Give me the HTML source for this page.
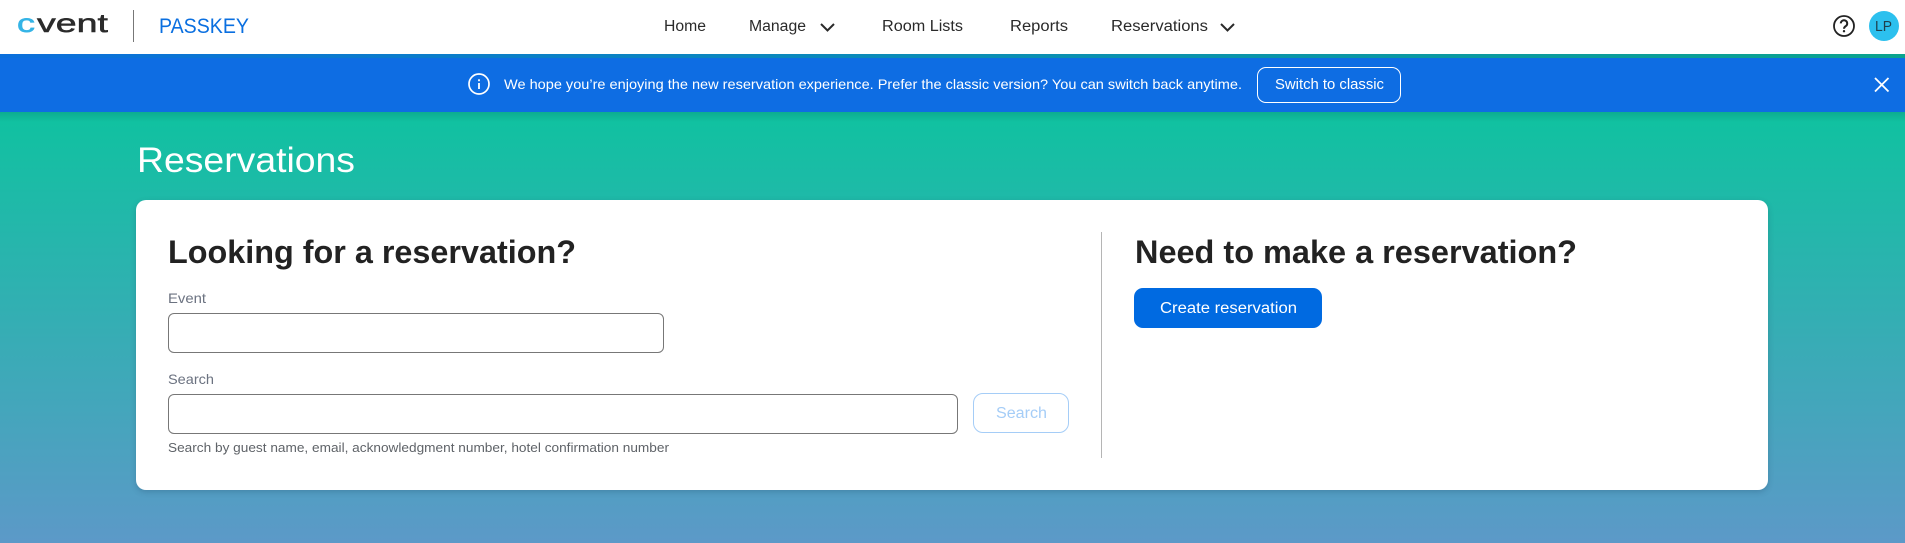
<!DOCTYPE html>
<html lang="en">
<head>
<meta charset="utf-8">
<title>Reservations</title>
<style>
html,body{margin:0;padding:0;width:1905px;height:543px;overflow:hidden;background:#5b9ac7}
body{position:relative;font-family:"Liberation Sans",sans-serif}
div,input,button{position:absolute;box-sizing:border-box;margin:0;padding:0}
#bg{left:0;top:112px;width:1905px;height:431px;background:linear-gradient(180deg,#0fc2a0 0%,#5c99c8 100%)}
#shade{left:0;top:112px;width:1905px;height:10px;background:linear-gradient(180deg,rgba(0,60,60,.16),rgba(0,60,60,0))}
#header{left:0;top:0;width:1905px;height:54px;background:#fff}
#strip{left:0;top:54px;width:1905px;height:4px;background:linear-gradient(90deg,#0b6fdc 0%,#0a8db5 50%,#0aa38e 100%)}
#banner{left:0;top:58px;width:1905px;height:54px;background:#0e6de3}
#card{left:136px;top:200px;width:1632px;height:290px;background:#fff;border-radius:10px;box-shadow:0 2px 6px rgba(30,60,90,.25)}
#vline{left:1101px;top:232px;width:1px;height:226px;background:#b5b5b5}
#dline{left:133px;top:10px;width:1px;height:32px;background:#777}
input{background:#fff;border:1px solid #777;border-radius:6px;outline:none}
#switch{left:1257px;top:67px;width:144px;height:36px;background:transparent;border:1px solid #fff;border-radius:9px}
#searchbtn{left:973px;top:393px;width:96px;height:40px;background:#fff;border:1px solid #a5cdf7;border-radius:10px}
#create{left:1134px;top:288px;width:188px;height:40px;background:#006ae1;border:0;border-radius:9px}
#avatar{left:1869px;top:11px;width:30px;height:30px;border-radius:50%;background:#2cc0ee}
svg{position:absolute;left:0;top:0}
text{font-family:"Liberation Sans",sans-serif}
</style>
</head>
<body>
<div id="bg"></div>
<div id="shade"></div>
<div id="header"></div>
<div id="strip"></div>
<div id="banner"></div>
<div id="dline"></div>
<div id="avatar"></div>
<div id="card"></div>
<div id="vline"></div>
<input id="event" type="text" style="left:168px;top:313px;width:496px;height:40px" aria-label="Event">
<input id="search" type="text" style="left:168px;top:394px;width:790px;height:40px" aria-label="Search">
<button id="switch" aria-label="Switch to classic"></button>
<button id="searchbtn" aria-label="Search"></button>
<button id="create" aria-label="Create reservation"></button>

<svg width="1905" height="543" viewBox="0 0 1905 543" xmlns="http://www.w3.org/2000/svg">
  <!-- logo -->
  <text x="17" y="32" font-size="26" fill="#35b4e6" stroke="#35b4e6" stroke-width=".6" textLength="18" lengthAdjust="spacingAndGlyphs">c</text>
  <text x="37" y="32" font-size="26" fill="#2b2b2b" stroke="#2b2b2b" stroke-width=".5" textLength="71" lengthAdjust="spacingAndGlyphs">vent</text>
  <text x="159" y="33" font-size="21" fill="#0a6fe0" textLength="90" lengthAdjust="spacingAndGlyphs">PASSKEY</text>

  <!-- nav -->
  <g font-size="15.5" fill="#2a2a2a">
    <text x="664" y="31" textLength="42" lengthAdjust="spacingAndGlyphs">Home</text>
    <text x="749" y="31" textLength="57" lengthAdjust="spacingAndGlyphs">Manage</text>
    <text x="882" y="31" textLength="81" lengthAdjust="spacingAndGlyphs">Room Lists</text>
    <text x="1010" y="31" textLength="58" lengthAdjust="spacingAndGlyphs">Reports</text>
    <text x="1111" y="31" textLength="97" lengthAdjust="spacingAndGlyphs">Reservations</text>
  </g>
  <g fill="none" stroke="#2a2a2a" stroke-width="2">
    <path d="M821 24l6.500 6.500 6.500-6.500"/>
    <path d="M1221 24l6.500 6.500 6.500-6.500"/>
  </g>

  <!-- help -->
  <circle cx="1844" cy="26" r="10" fill="none" stroke="#222" stroke-width="1.8"/>
  <path d="M1840.8 23.4a3.2 3.2 0 1 1 5 2.7c-1.100.8-1.800 1.300-1.800 2.600" fill="none" stroke="#222" stroke-width="2"/>
  <circle cx="1844" cy="31.2" r="1.2" fill="#222"/>
  <text x="1875" y="31" font-size="15" fill="#1f3f4c" textLength="17" lengthAdjust="spacingAndGlyphs">LP</text>

  <!-- banner -->
  <circle cx="479" cy="84" r="10" fill="none" stroke="#fff" stroke-width="1.7"/>
  <rect x="478.1" y="83" width="1.8" height="6" fill="#fff"/>
  <rect x="478.1" y="79.3" width="1.8" height="1.9" fill="#fff"/>
  <text x="504" y="89" font-size="14" fill="#fff" textLength="738" lengthAdjust="spacingAndGlyphs">We hope you’re enjoying the new reservation experience. Prefer the classic version? You can switch back anytime.</text>
  <text x="1275" y="89" font-size="14.5" fill="#fff" textLength="109" lengthAdjust="spacingAndGlyphs">Switch to classic</text>
  <path d="M1875 78l13.500 13.500M1888.500 78l-13.500 13.500" stroke="#fff" stroke-width="1.8" fill="none"/>

  <!-- title -->
  <text x="137" y="172" font-size="35.500" fill="#fff" textLength="218" lengthAdjust="spacingAndGlyphs">Reservations</text>

  <!-- left column -->
  <text x="168" y="263" font-size="32" font-weight="bold" fill="#222" textLength="408" lengthAdjust="spacingAndGlyphs">Looking for a reservation?</text>
  <text x="168" y="303" font-size="14" fill="#6b7280" textLength="38" lengthAdjust="spacingAndGlyphs">Event</text>
  <text x="168" y="384" font-size="14" fill="#6b7280" textLength="46" lengthAdjust="spacingAndGlyphs">Search</text>
  <text x="168" y="452" font-size="13" fill="#5f6368" textLength="501" lengthAdjust="spacingAndGlyphs">Search by guest name, email, acknowledgment number, hotel confirmation number</text>
  <text x="996" y="418" font-size="15.500" fill="#a5cdf7" textLength="51" lengthAdjust="spacingAndGlyphs">Search</text>

  <!-- right column -->
  <text x="1135" y="263" font-size="32" font-weight="bold" fill="#222" textLength="442" lengthAdjust="spacingAndGlyphs">Need to make a reservation?</text>
  <text x="1160" y="313" font-size="15.500" fill="#fff" textLength="137" lengthAdjust="spacingAndGlyphs">Create reservation</text>
</svg>
</body>
</html>
